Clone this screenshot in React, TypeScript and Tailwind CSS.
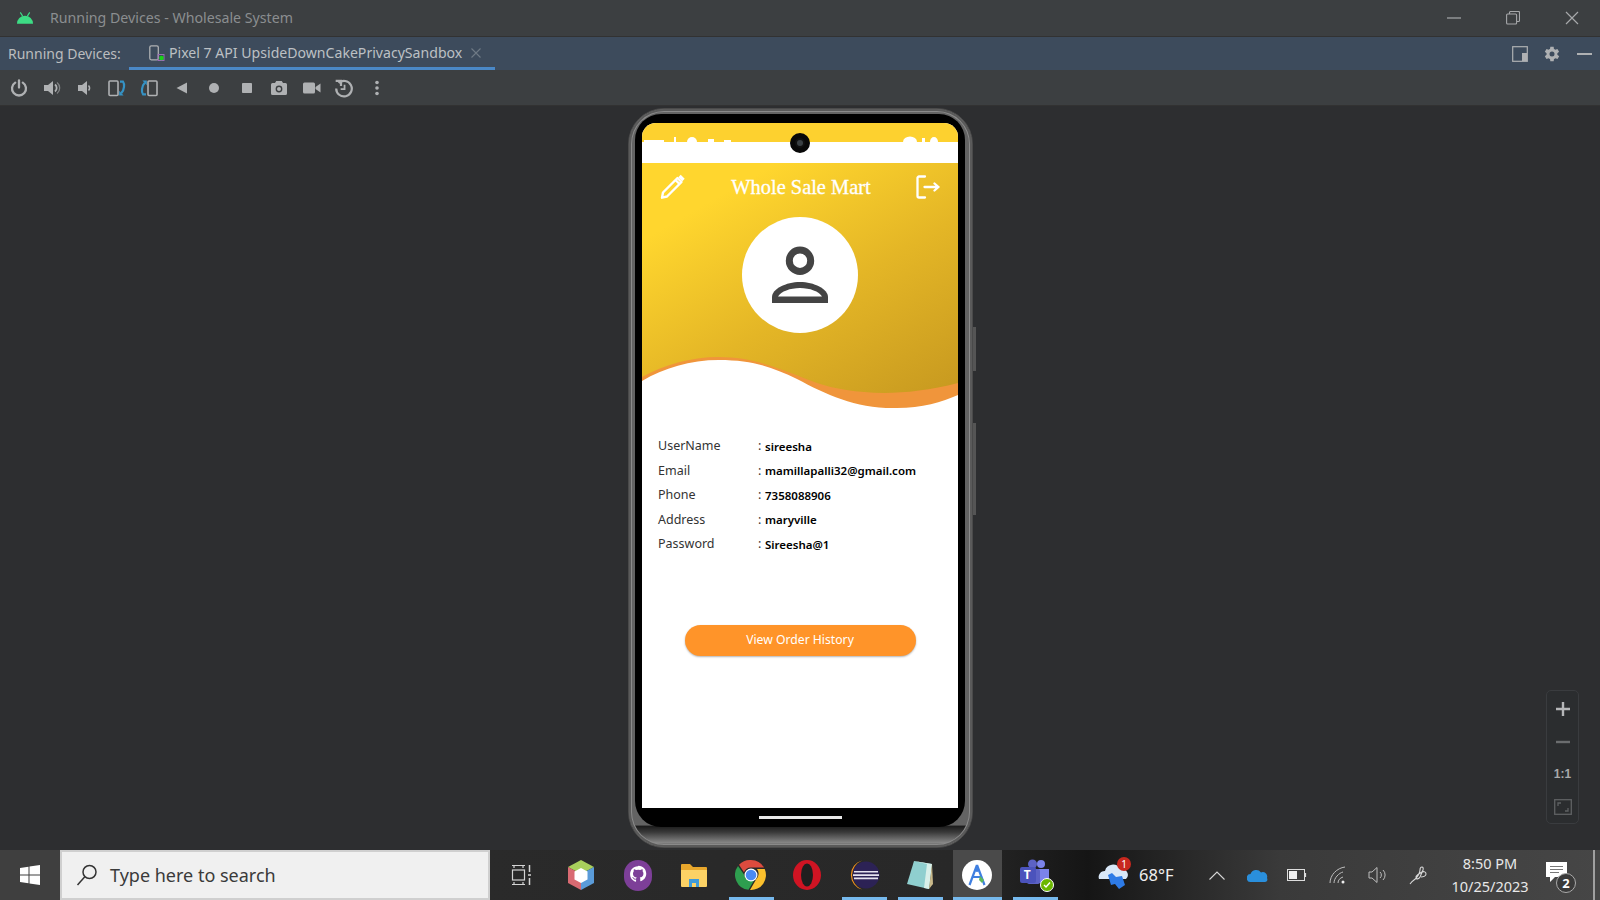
import React from "react";

const C = "#afb1b3";
const B = "#3592c4";

function Ico({ children, w = 18, h = 18, vb = "0 0 18 18" }: { children: React.ReactNode; w?: number; h?: number; vb?: string }) {
  return <svg width={w} height={h} viewBox={vb} fill="none">{children}</svg>;
}

const toolbar: React.ReactNode[] = [
  <Ico key="p"><path d="M5.200 3.600a7 7 0 1 0 7.600 0" stroke={C} strokeWidth="2.300" strokeLinecap="round" /><path d="M9 1.500v7" stroke={C} strokeWidth="2.300" strokeLinecap="round" /></Ico>,
  <Ico key="v1"><path d="M1 6h4l5-4v14l-5-4H1z" fill={C} /><path d="M12 5.500a4.500 4.500 0 0 1 0 7" stroke={C} strokeWidth="1.800" /><path d="M14 3.500a7 7 0 0 1 0 11" stroke={C} strokeWidth="1.300" opacity=".6" /></Ico>,
  <Ico key="v2"><path d="M3 6h4l5-4v14l-5-4H3z" fill={C} /><path d="M13.500 6.500a3.500 3.500 0 0 1 0 5" stroke={C} strokeWidth="1.600" /></Ico>,
  <Ico key="r1"><rect x="1" y="2" width="9" height="14.500" rx="1" stroke={C} strokeWidth="1.600" /><path d="M12 2.600h3c1.600 2 1.700 8-1.800 11.600" stroke={B} strokeWidth="2.200" /><path d="M11.200 11.800v4.700h4.400z" fill={B} /></Ico>,
  <Ico key="r2"><rect x="8" y="2" width="9" height="14.500" rx="1" stroke={C} strokeWidth="1.600" /><path d="M6 15.400H3C1.400 13.400 1.300 7.400 4.800 3.800" stroke={B} strokeWidth="2.200" /><path d="M6.800 6.200V1.500H2.400z" fill={B} /></Ico>,
  <Ico key="back"><path d="M14 3.500v11L3.500 9z" fill={C} /></Ico>,
  <Ico key="home"><circle cx="9" cy="9" r="5" fill={C} /></Ico>,
  <Ico key="stop"><rect x="4" y="4" width="10" height="10" rx=".8" fill={C} /></Ico>,
  <Ico key="cam"><path d="M1 5.500A1.500 1.500 0 0 1 2.500 4H5l1.200-2h5.600L13 4h2.500A1.500 1.500 0 0 1 17 5.500v9a1.500 1.500 0 0 1-1.500 1.500h-13A1.500 1.500 0 0 1 1 14.500z" fill={C} /><circle cx="9" cy="10" r="3.400" fill="#3c3f41" /><circle cx="9" cy="10" r="2" fill={C} /></Ico>,
  <Ico key="vid"><rect x="0" y="3.500" width="12" height="11" rx="1.500" fill={C} /><path d="M12.500 8l5-3.500v9l-5-3.500z" fill={C} /></Ico>,
  <Ico key="snap" w={20} h={20}><path d="M4.200 4.500A7 7 0 1 1 2 9.500" stroke={C} strokeWidth="2" /><path d="M1.500 2.500h4.800v4.800" stroke={C} strokeWidth="2" /><path d="M9.500 6v4H6" stroke={C} strokeWidth="1.600" /></Ico>,
  <Ico key="more"><circle cx="9" cy="3.500" r="1.800" fill={C} /><circle cx="9" cy="9" r="1.800" fill={C} /><circle cx="9" cy="14.500" r="1.800" fill={C} /></Ico>,
];

const rows = [
  ["UserName", "sireesha"],
  ["Email", "mamillapalli32@gmail.com"],
  ["Phone", "7358088906"],
  ["Address", "maryville"],
  ["Password", "Sireesha@1"],
];

function TitleBar() {
  return (
    <div className="h-[37px] shrink-0 flex items-center bg-[#3c3f41] border-b border-[#323232] pl-[17px]">
      <svg width="16" height="12" viewBox="0 0 17 12" fill="#3ddc84">
        <path d="M0 12a8.500 8.500 0 0 1 17 0z" />
        <path d="M3.500 0l2.500 4M13.500 0L11 4" stroke="#3ddc84" strokeWidth="1.200" />
      </svg>
      <span className="ml-[17px] text-[14.200px] text-[#8b8e90] font-['Noto_Sans',sans-serif]">Running Devices - Wholesale System</span>
      <div className="ml-auto flex items-center text-[#a6a8aa]">
        <div className="w-[59px] flex justify-center">
          <svg width="14" height="2" viewBox="0 0 14 2"><path d="M0 1h14" stroke="#a6a8aa" strokeWidth="1.200" /></svg>
        </div>
        <div className="w-[59px] flex justify-center">
          <svg width="14" height="14" viewBox="0 0 14 14" fill="none" stroke="#a6a8aa" strokeWidth="1.100">
            <rect x=".6" y="3" width="10" height="10" rx="1" />
            <path d="M3.500 3V1.500a1 1 0 0 1 1-1h8a1 1 0 0 1 1 1v8a1 1 0 0 1-1 1H11" />
          </svg>
        </div>
        <div className="w-[59px] flex justify-center mr-[-1px]">
          <svg width="14" height="14" viewBox="0 0 14 14" stroke="#a6a8aa" strokeWidth="1.200"><path d="M1 1l12 12M13 1L1 13" /></svg>
        </div>
      </div>
    </div>
  );
}

function TabBar() {
  return (
    <div className="h-[33px] shrink-0 flex items-stretch bg-[#3d4b5c] pl-[8px] font-['Noto_Sans',sans-serif]">
      <span className="self-center text-[14px] text-[#bbbdbf] w-[121px]">Running Devices:</span>
      <div className="w-[366px] relative flex items-center pl-[20px] pt-[2px] border-b-[3px] border-[#4a88c7]">
        <svg width="16" height="17" viewBox="0 0 16 17" fill="none">
          <rect x=".8" y=".8" width="8.500" height="14" rx="1.500" stroke="#afb1b3" strokeWidth="1.300" />
          <rect x="9" y="9.500" width="6" height="6" stroke="#9a6fb3" strokeWidth="1" />
          <circle cx="12.500" cy="13" r="2.300" fill="#19d219" />
        </svg>
        <span className="ml-[4px] text-[14.100px] text-[#bcc0c4]">Pixel 7 API UpsideDownCakePrivacySandbox</span>
        <svg className="ml-[9px]" width="10" height="10" viewBox="0 0 10 10" stroke="#6f7a85" strokeWidth="1.100"><path d="M.5.500l9 9M9.500.500l-9 9" /></svg>
      </div>
      <div className="ml-auto flex items-center">
        <div className="w-[32px] flex justify-center">
          <svg width="16" height="16" viewBox="0 0 16 16" fill="none">
            <rect x=".7" y=".7" width="14.600" height="14.600" stroke="#afb1b3" strokeWidth="1.200" />
            <rect x="10" y="7" width="5" height="8" fill="#afb1b3" />
          </svg>
        </div>
        <div className="w-[32px] flex justify-center">
          <svg width="20" height="20" viewBox="0 0 24 24" fill="#afb1b3">
            <path fillRule="evenodd" d="M20.400 13a8 8 0 0 0 0-2l2.100-1.600-2-3.500-2.500 1a7.600 7.600 0 0 0-1.700-1L16 3.200h-4l-.4 2.700a7.600 7.600 0 0 0-1.700 1l-2.500-1-2 3.500L7.500 11a8 8 0 0 0 0 2l-2.100 1.600 2 3.500 2.500-1c.5.400 1.100.7 1.700 1l.4 2.700h4l.4-2.700c.6-.3 1.200-.6 1.700-1l2.500 1 2-3.500zM14 15a3 3 0 1 1 0-6 3 3 0 0 1 0 6z" transform="translate(-2 0)" />
          </svg>
        </div>
        <div className="w-[32px] flex justify-center">
          <div className="w-[15px] h-[2px] bg-[#afb1b3]" />
        </div>
      </div>
    </div>
  );
}

function Toolbar() {
  return (
    <div className="h-[36px] shrink-0 flex items-center bg-[#3c3f41] border-b border-[#323232] pl-[3px]">
      {toolbar.map((n, i) => (
        <div key={i} className="w-[32.500px] flex justify-center">{n}</div>
      ))}
    </div>
  );
}

function Screen() {
  return (
    <div className="relative rounded-t-[14px] overflow-hidden bg-white w-[316px] h-[685px] flex flex-col">
      <div className="h-[19px] shrink-0 bg-[#fdd12f]">
        <svg width="316" height="19" viewBox="0 0 316 19" fill="#fff">
          <rect x="2" y="17" width="20" height="2" />
          <rect x="32" y="14" width="2" height="5" />
          <path d="M45 19a5 5 0 0 1 10 0z" />
          <rect x="66" y="16" width="6" height="3" />
          <rect x="82" y="17" width="7" height="2" />
          <path d="M261 19a7 5.500 0 0 1 14 0z" />
          <rect x="280" y="15" width="3" height="4" />
          <path d="M288 19a4 5 0 0 1 8 0z" />
        </svg>
      </div>
      <div className="h-[21px] shrink-0 bg-white" />
      <div className="relative h-[247px] shrink-0 bg-[linear-gradient(150deg,#ffd62e_18%,#e4b626_55%,#c4961f_100%)]">
        <div className="flex items-center justify-between h-[48px] pl-[18px] pr-[18px]">
          <svg width="26" height="26" viewBox="0 0 26 26" fill="none" stroke="#fff" strokeWidth="2.400" strokeLinejoin="round">
            <path d="M3 18.500L17.500 4l4 4L7 22.500l-5 1.200z" />
            <path d="M19.500 2l4 4" strokeWidth="3.400" />
            <path d="M15.500 6l4 4" />
          </svg>
          <span className="text-[20.400px] text-white font-['Liberation_Serif',serif] [-webkit-text-stroke:0.3px_white]">Whole Sale Mart</span>
          <svg width="24" height="24" viewBox="0 0 24 24" fill="none" stroke="#fff" strokeWidth="2.300" strokeLinecap="round" strokeLinejoin="round">
            <path d="M9 1.500H3A1.500 1.500 0 0 0 1.500 3v18A1.500 1.500 0 0 0 3 22.500h6" />
            <path d="M8.500 12h14M18.500 8.500L22.500 12l-4 3.500" />
          </svg>
        </div>
        <div className="flex justify-center mt-[6px]">
          <div className="w-[116px] h-[116px] rounded-full bg-white flex items-center justify-center">
            <svg width="60" height="60" viewBox="0 0 60 60" fill="none">
              <circle cx="30" cy="15.700" r="10.700" stroke="#444" strokeWidth="7" />
              <path d="M2 58h56v-6C58 44 44 37 30 37S2 44 2 52z" fill="#444" />
              <path d="M8 51.500c3-5 12-8.500 22-8.500s19 3.500 22 8.500z" fill="#fff" />
            </svg>
          </div>
        </div>
      </div>
      <svg className="absolute left-0 top-[234px]" width="316" height="60" viewBox="0 0 316 60">
        <path d="M0 20C22 8 48 0 77 0c38 0 68 15 98 26 30 10 80 16 141 0v34H0z" fill="#f0953b" />
        <path d="M0 24C22 11 48 3 77 3c33 0 53 7 78 19 30 16 60 30 100 29 25 0 45-6 61-13v22H0z" fill="#fff" />
      </svg>
      <div className="px-[16px] mt-[24px] font-['Noto_Sans',sans-serif]">
        {rows.map(([k, v]) => (
          <div key={k} className="h-[24.600px] flex items-center">
            <span className="w-[100px] text-[#333] text-[12.500px]">{k}</span>
            <span className="w-[7px] text-[#333] text-[12.500px]">:</span>
            <span className="text-black font-semibold text-[11.500px]">{v}</span>
          </div>
        ))}
      </div>
      <div className="flex justify-center mt-[68px]">
        <div className="w-[231px] h-[31px] rounded-full bg-[#ff9429] shadow-[0_1px_2px_rgba(0,0,0,0.3)] flex items-center justify-center text-white text-[12.200px] font-['Noto_Sans',sans-serif]">
          View Order History
        </div>
      </div>
    </div>
  );
}

function Phone() {
  return (
    <div className="relative mt-[2px] w-[345px] h-[740px] rounded-[36px] border border-[#4a4a4a] pt-[5px] px-[6.500px] bg-[linear-gradient(180deg,#636363_0%,#636363_97%,#1c1c1c_97.200%,#3a3a3a_98%,#858585_99.400%,#4c4c4c_100%)] shadow-[inset_0_0_0_2px_#5a5a5a,inset_0_0_0_3px_#8a8a8a]">
      <div className="h-[713px] rounded-[26px] bg-black px-[7px] pt-[9px] flex flex-col items-center relative">
        <Screen />
        <div className="mt-[8px] w-[83px] h-[3px] bg-[#e8e8e8]" />
        <div className="absolute top-[19px] left-1/2 -translate-x-1/2 w-[20px] h-[20px] rounded-full bg-[#101010] border-[5px] border-[#080808] flex items-center justify-center">
          <div className="w-[6px] h-[6px] rounded-full bg-[#3a4044]" />
        </div>
      </div>
      <div className="absolute right-[-4px] top-[218px] w-[3px] h-[44px] bg-[#555]" />
      <div className="absolute right-[-4px] top-[314px] w-[3px] h-[92px] bg-[#555]" />
    </div>
  );
}

function ZoomPanel() {
  const cell = "h-[32.500px] flex items-center justify-center";
  return (
    <div className="absolute right-[21px] bottom-[26px] w-[33px] h-[134px] rounded-[5px] bg-[#2b2d2f] border border-[#3a3c3f] pt-[2px] flex flex-col font-['Liberation_Sans',sans-serif]">
      <div className={cell}>
        <svg width="14" height="14" viewBox="0 0 14 14" stroke="#b5b6b8" strokeWidth="2.400"><path d="M7 0v14M0 7h14" /></svg>
      </div>
      <div className={cell}>
        <svg width="14" height="14" viewBox="0 0 14 14" stroke="#6b6d6f" strokeWidth="2.400"><path d="M0 7h14" /></svg>
      </div>
      <div className={cell}>
        <span className="text-[12px] font-bold text-[#a8a9ab]">1:1</span>
      </div>
      <div className={cell}>
        <svg width="18" height="16" viewBox="0 0 18 16" fill="none" stroke="#5f6163" strokeWidth="1.300">
          <rect x=".7" y=".7" width="16.600" height="14.600" />
          <path d="M4 7V4h3M14 9v3h-3" />
        </svg>
      </div>
    </div>
  );
}

function TaskIcon({ children, bar, active }: { children: React.ReactNode; bar?: boolean; active?: boolean }) {
  return (
    <div className="relative w-[56.500px] h-full flex items-center justify-center">
      {active && <div className="absolute inset-y-0 left-[4px] w-[49px] bg-[#4a4a4a]" />}
      <div className="relative">{children}</div>
      {bar && <div className={`absolute bottom-0 h-[3px] bg-[#76b9ed] ${active ? "left-[4px] w-[49px]" : "left-[6px] w-[45px]"}`} />}
    </div>
  );
}

function Taskbar() {
  return (
    <div className="h-[50px] shrink-0 flex items-stretch text-white bg-[linear-gradient(90deg,#2c2c2c_0%,#282828_60%,#1a1a1a_66%,#151515_68%,#1c1c1c_70%,#3a3a3a_80%,#464646_100%)] font-['Noto_Sans',sans-serif]">
      <div className="w-[60px] flex items-center justify-center bg-[#3f3f3f]">
        <svg width="20" height="20" viewBox="0 0 20 20" fill="#fff">
          <path d="M0 3l8.500-1.300V9.500H0zM9.500 1.500L20 0v9.500H9.500zM0 10.500h8.500v7.800L0 17zM9.500 10.500H20V20L9.500 18.500z" />
        </svg>
      </div>
      <div className="w-[430px] flex items-center bg-[#f0f0f0] border-2 border-[#cfcfcf] pl-[14px]">
        <svg width="22" height="24" viewBox="0 0 22 24" fill="none" stroke="#333" strokeWidth="1.500">
          <circle cx="13.500" cy="9" r="6.500" />
          <path d="M8.800 13.800L1.500 22" />
        </svg>
        <span className="ml-[12px] text-[18px] text-[#3a3a3a]">Type here to search</span>
      </div>
      <div className="w-[63px] flex items-center justify-center">
        <svg width="22" height="22" viewBox="0 0 22 22" fill="none" stroke="#d5d5d5" strokeWidth="1.200">
          <path d="M1 1.500h13M1 20.500h13M3 1v3M12 1v3M3 18v3M12 18v3" />
          <rect x="1.500" y="6" width="12" height="10" />
          <path d="M18.500 1v7M18.500 14v7M17 11h3" strokeWidth="1.500" />
        </svg>
      </div>
      <TaskIcon>
        <svg width="28" height="32" viewBox="0 0 28 32">
          <path d="M14 1L1 8l13 7 13-7z" fill="#a8cf5c" />
          <path d="M1 8v16l13 7V15z" fill="#d96a72" />
          <path d="M27 8v16l-13 7V15z" fill="#5a9bd9" />
          <path d="M14 9l6.500 3.500v8L14 24l-6.500-3.500v-8z" fill="#fff" />
        </svg>
      </TaskIcon>
      <TaskIcon>
        <div className="w-[28px] h-[31px] rounded-full bg-[#7d3f98] flex items-center justify-center">
          <svg width="20" height="20" viewBox="0 0 24 24" fill="#fff">
            <path d="M12 1.500C6 1.500 2.500 6 2.500 11c0 4.200 2.700 7.700 6.500 9 .5.100.7-.2.7-.5v-2c-2.700.6-3.300-1.200-3.300-1.200-.4-1.100-1.100-1.400-1.100-1.400-.9-.6.100-.6.100-.6 1 .1 1.500 1 1.500 1 .9 1.500 2.300 1.100 2.900.8.100-.6.300-1.100.6-1.300-2.100-.2-4.400-1-4.400-4.700 0-1 .4-1.900 1-2.600-.1-.2-.4-1.200.1-2.500 0 0 .8-.3 2.700 1a9 9 0 0 1 4.900 0c1.900-1.300 2.700-1 2.700-1 .5 1.300.2 2.300.1 2.500.6.700 1 1.500 1 2.600 0 3.700-2.300 4.500-4.400 4.700.3.300.6.800.6 1.700v2.500c0 .3.200.6.700.5 3.800-1.300 6.500-4.800 6.500-9 0-5-3.500-9.500-9.500-9.500z" />
          </svg>
        </div>
      </TaskIcon>
      <TaskIcon>
        <svg width="28" height="25" viewBox="0 0 28 25">
          <path d="M1 2a1 1 0 0 1 1-1h8l3 3h13a1 1 0 0 1 1 1v3H1z" fill="#e8a72c" />
          <path d="M1 7h26v16a1 1 0 0 1-1 1H2a1 1 0 0 1-1-1z" fill="#fcd265" />
          <path d="M9 24v-8h10v8h-3v-4h-4v4z" fill="#3f9bd9" />
        </svg>
      </TaskIcon>
      <TaskIcon bar>
        <svg width="32" height="32" viewBox="0 0 32 32">
          <path d="M16 1a15 15 0 0 1 13 7.500H16a7.500 7.500 0 0 0-7 4.800L4 5.800A15 15 0 0 1 16 1z" fill="#dd4b3e" />
          <path d="M29.700 10A15 15 0 0 1 15 31l6.500-11.200A7.500 7.500 0 0 0 22 10z" fill="#fbc02d" />
          <path d="M3 7a15 15 0 0 0 10.500 23.800l5.800-9.800A7.500 7.500 0 0 1 9 15.500z" fill="#2e9e4f" />
          <circle cx="16" cy="16" r="6.500" fill="#fff" />
          <circle cx="16" cy="16" r="5.300" fill="#4a8af4" />
        </svg>
      </TaskIcon>
      <TaskIcon>
        <svg width="30" height="32" viewBox="0 0 30 32">
          <ellipse cx="15" cy="16" rx="14" ry="15" fill="#d01423" />
          <ellipse cx="15" cy="16" rx="6" ry="11.500" fill="#1f1f1f" />
        </svg>
      </TaskIcon>
      <TaskIcon bar>
        <svg width="32" height="32" viewBox="0 0 32 32">
          <circle cx="18" cy="16" r="13.500" fill="#2c2255" />
          <path d="M14 1.500A15 15 0 0 0 14 30.500 16 16 0 0 1 4 16 16 16 0 0 1 14 1.500z" fill="#f7941e" />
          <path d="M6 12h24v1.600H6zM5 15.300h26v1.600H5zM6 18.600h24v1.600H6z" fill="#e6e3f0" />
        </svg>
      </TaskIcon>
      <TaskIcon bar>
        <svg width="30" height="32" viewBox="0 0 30 32">
          <path d="M9 2l18 3-3 25L2 25z" fill="#8fcfcf" />
          <path d="M9 2l18 3-3 25-5-1 3-24z" fill="#d8efe9" />
          <path d="M27 5l1 20-4 5z" fill="#c9b98a" />
        </svg>
      </TaskIcon>
      <TaskIcon bar active>
        <div className="w-[30px] h-[30px] rounded-full bg-white flex items-center justify-center">
          <svg width="24" height="24" viewBox="0 0 24 24" fill="none" stroke="#3f7fe0" strokeWidth="2.200">
            <path d="M12 2L4.500 22M12 2l7.500 20M6.500 14h11" />
            <circle cx="12" cy="7" r="2" fill="#3f7fe0" stroke="none" />
            <path d="M15 13l4 4-2 3-3-3z" fill="#5cb85c" stroke="none" />
          </svg>
        </div>
      </TaskIcon>
      <div className="ml-[2px]">
        <TaskIcon bar>
          <div className="relative w-[30px] h-[32px]">
            <svg width="30" height="30" viewBox="0 0 30 30">
              <circle cx="21" cy="5" r="4" fill="#7b83eb" />
              <circle cx="12.500" cy="5" r="4.500" fill="#5c62c5" />
              <path d="M18 10h11v9a5 5 0 0 1-5 5h-6z" fill="#7b83eb" />
              <rect x="7" y="10" width="13" height="15" rx="2" fill="#5c62c5" />
              <rect x="0" y="8" width="16" height="16" rx="2" fill="#4b53bc" />
            </svg>
            <span className="absolute left-[3.500px] top-[9px] text-[12px] font-bold text-white leading-[14px]">T</span>
            <div className="absolute right-[-4px] bottom-[-1px] w-[14px] h-[14px] rounded-full bg-[#6bb700] border border-white flex items-center justify-center">
              <svg width="8" height="8" viewBox="0 0 8 8" fill="none" stroke="#fff" strokeWidth="1.400"><path d="M1 4l2 2 4-4.500" /></svg>
            </div>
          </div>
        </TaskIcon>
      </div>
      <div className="ml-auto flex items-center">
        <div className="w-[46px] flex justify-end pr-[8px]">
          <div className="relative w-[31px] h-[30px]">
            <svg width="31" height="30" viewBox="0 0 31 30">
              <path d="M1 19a6 6 0 0 1 6-8 8 8 0 0 1 15-2 6 6 0 0 1 6 10z" fill="#d9e8f8" />
              <path d="M10 15l4-2 4 4 6-1 3 9-6 4-4-5-4 1z" fill="#2e7be6" />
            </svg>
            <div className="absolute right-[-2px] top-[-3px] w-[14px] h-[14px] rounded-full bg-[#c8281e] text-[10px] leading-[14px] text-center text-white">1</div>
          </div>
        </div>
        <span className="w-[60px] pl-[2px] text-[16.500px] text-[#eeeeee]">68°F</span>
        <div className="w-[40px] flex justify-center">
          <svg width="16" height="9" viewBox="0 0 16 9" fill="none" stroke="#d8d8d8" strokeWidth="1.100"><path d="M.5 8.500L8 1l7.500 7.500" /></svg>
        </div>
        <div className="w-[40px] flex justify-center">
          <svg width="21" height="13" viewBox="0 0 21 13"><path d="M4 13A4 4 0 0 1 3.500 5 6 6 0 0 1 14 3.500 4.500 4.500 0 0 1 20 9c1 2 0 4-2 4z" fill="#2a8fdc" /></svg>
        </div>
        <div className="w-[40px] flex justify-center">
          <svg width="20" height="12" viewBox="0 0 20 12" fill="none">
            <rect x=".5" y=".5" width="17" height="11" stroke="#ddd" />
            <rect x="2" y="2" width="8" height="8" fill="#eee" />
            <path d="M18.500 4v4" stroke="#ddd" strokeWidth="1.200" />
          </svg>
        </div>
        <div className="w-[41px] flex justify-center">
          <svg width="18" height="18" viewBox="0 0 18 18" fill="none" stroke="#bdbdbd" strokeWidth="1">
            <path d="M1 17C1 9 8 2 16 1M5 17c0-5 5-10 9-11M9 17c0-3 2-5 5-6" />
            <circle cx="14" cy="16" r="1.500" fill="#eee" stroke="none" />
          </svg>
        </div>
        <div className="w-[39px] flex justify-center">
          <svg width="20" height="18" viewBox="0 0 20 18" fill="none" stroke="#bdbdbd" strokeWidth="1">
            <path d="M1 6h3l5-4.500v15L4 12H1z" />
            <path d="M12 6a4 4 0 0 1 0 6M15 4a7 7 0 0 1 0 10" />
          </svg>
        </div>
        <div className="w-[44px] flex justify-center">
          <svg width="20" height="20" viewBox="0 0 20 20" fill="none" stroke="#d8d8d8" strokeWidth="1.100">
            <path d="M1 19c1.500-2 2.500-3 4-4 3-2 6-7 6-10 0-2 1-3 2-3s1.500 1 1 3l-3 7c-1 2-4 3-4 0 0-2 3-3 6-5 2-1 4 0 4 2s-3 3-5 3" />
          </svg>
        </div>
        <div className="w-[96px] flex flex-col items-center text-[14.500px] leading-[23px] text-[#e8e8e8] pl-[2px]">
          <span>8:50 PM</span>
          <span>10/25/2023</span>
        </div>
        <div className="w-[44px] flex justify-center">
          <div className="relative w-[26px] h-[30px]">
            <svg width="22" height="22" viewBox="0 0 22 22" className="mt-[2px]">
              <path d="M0 0h21v15H9l-5 5v-5H0z" fill="#fff" />
              <path d="M4 4.500h13M4 7.500h13M4 10.500h9" stroke="#777" strokeWidth="1" />
            </svg>
            <div className="absolute right-[-4px] bottom-[-3px] w-[20px] h-[20px] rounded-full bg-[#3a3a3a] border border-[#aaa] text-[13px] font-bold leading-[18px] text-center text-white">2</div>
          </div>
        </div>
        <div className="w-[19px] h-full flex justify-center">
          <div className="w-[2px] h-full ml-[6px] bg-[#a0a0a0]" />
        </div>
      </div>
    </div>
  );
}

export default function App() {
  return (
    <div className="w-[1600px] h-[900px] overflow-hidden flex flex-col bg-[#2d2e30]">
      <TitleBar />
      <TabBar />
      <Toolbar />
      <div className="relative flex-1 flex justify-center items-start">
        <Phone />
        <ZoomPanel />
      </div>
      <Taskbar />
    </div>
  );
}
